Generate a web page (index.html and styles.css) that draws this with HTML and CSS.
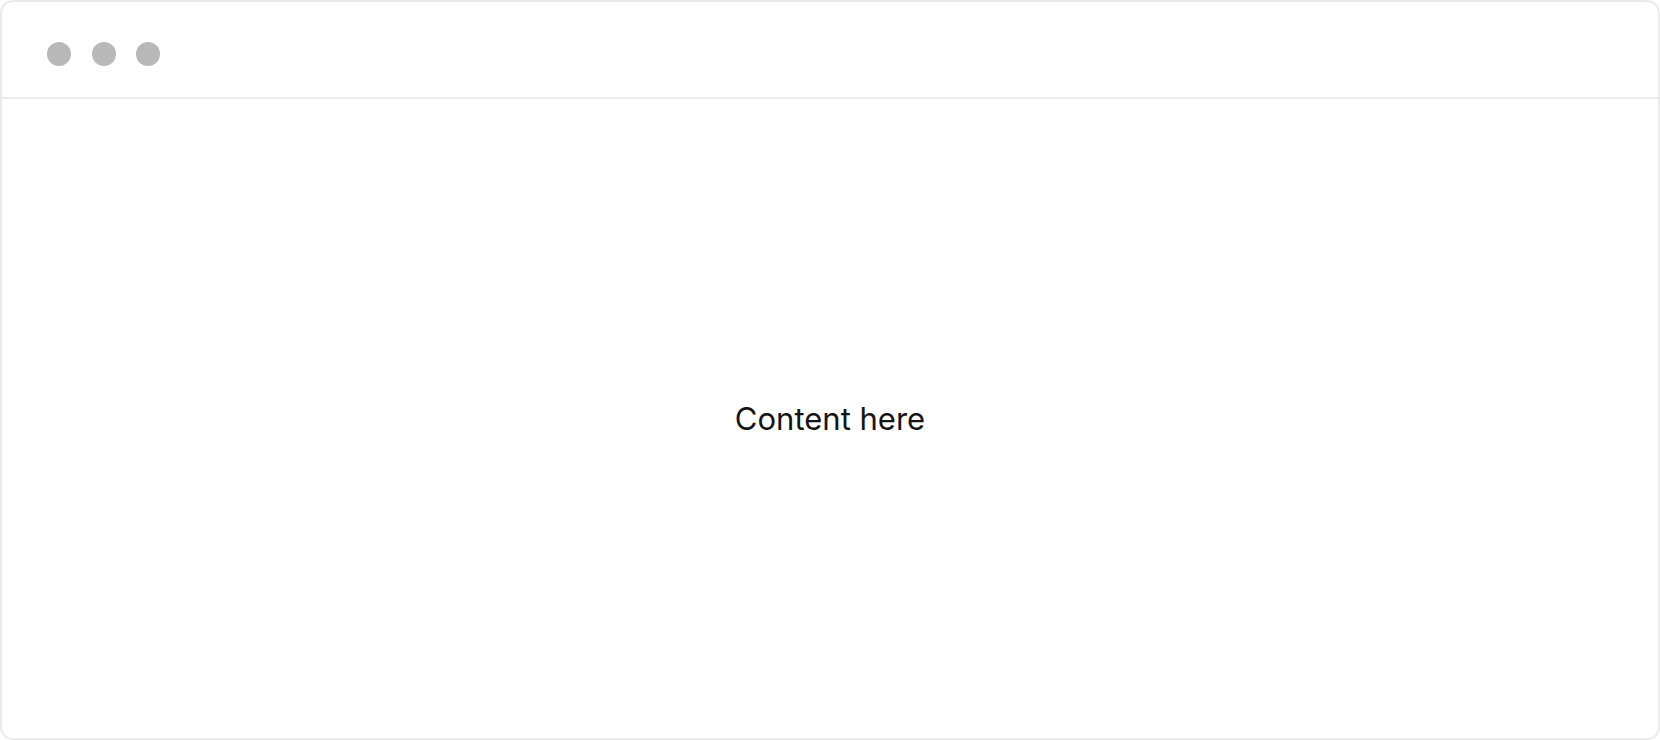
FILE: index.html
```html
<!DOCTYPE html>
<html lang="en">
<head>
    <meta charset="UTF-8">
    <meta name="viewport" content="width=device-width, initial-scale=1.0">
    <title>Window</title>
    <link rel="stylesheet" href="styles.css">
</head>
<body>

    <div class="window">
        <div class="titlebar">
            <span class="dot"></span>
            <span class="dot"></span>
            <span class="dot"></span>
        </div>
        <div class="content">
            <p>Content here</p>
        </div>
    </div>

</body>
</html>
```

FILE: styles.css
```css
html, body {
    margin: 0;
    padding: 0;
    background-color: #ffffff;
}
.window {
    box-sizing: border-box;
    width: 1660px;
    height: 740px;
    border: 2px solid #ebebeb;
    border-radius: 13px;
    display: flex;
    flex-direction: column;
    overflow: hidden;
}
.titlebar {
    height: 97px;
    border-bottom: 2px solid #ebebeb;
    display: flex;
    align-items: center;
    gap: 20.5px;
    padding-left: 45px;
    padding-top: 8px;
    box-sizing: border-box;
}
.dot {
    width: 24px;
    height: 24px;
    border-radius: 50%;
    background-color: #b8b8b8;
}
.content {
    flex: 1;
    display: flex;
    align-items: center;
    justify-content: center;
}
.content p {
    margin: 0;
    font-family: Inter, "Liberation Sans", sans-serif;
    font-size: 31px;
    color: #141414;
}
```
